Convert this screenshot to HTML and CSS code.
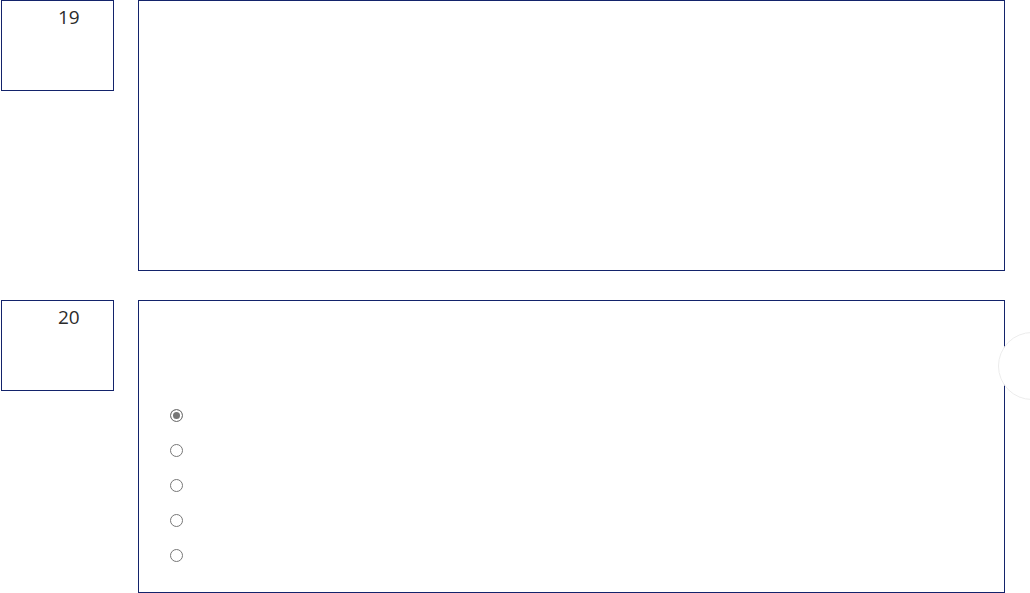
FILE: index.html
```html
<!DOCTYPE html>
<html lang="en">
  <head>
    <meta charset="UTF-8" />
    <meta name="viewport" content="width=device-width, initial-scale=1.0" />
    <title>Questions</title>
    <link rel="stylesheet" href="styles.css">
  </head>
  <body>
    <div class="question">
      <div class="q-number">19</div>
      <div class="q-body q-body-tall"></div>
    </div>

    <div class="question">
      <div class="q-number">20</div>
      <div class="q-body q-body-options">
        <ul class="options">
          <li><input type="radio" name="q20" checked disabled /></li>
          <li><input type="radio" name="q20" disabled /></li>
          <li><input type="radio" name="q20" disabled /></li>
          <li><input type="radio" name="q20" disabled /></li>
          <li><input type="radio" name="q20" disabled /></li>
        </ul>
      </div>
    </div>

    <button class="float-btn" aria-label="menu"></button>
  </body>
</html>
```

FILE: styles.css
```css
* {
  margin: 0;
  padding: 0;
  box-sizing: border-box;
}
body {
  background-color: white;
  font-family: "Open Sans", sans-serif;
  color: #2b2b2b;
  overflow: hidden;
}

.question {
  display: flex;
  align-items: flex-start;
  gap: 24px;
  padding-left: 1px;
  margin-bottom: 29px;
}

.q-number {
  width: 113px;
  height: 91px;
  border: 1px solid #13236b;
  padding: 3px 0 0 56px;
  font-size: 19px;
}

.q-body {
  width: 867px;
  border: 1px solid #13236b;
}
.q-body-tall {
  height: 271px;
}
.q-body-options {
  height: 293px;
  padding: 97px 0 0 31px;
}

.options {
  list-style: none;
}
.options li {
  height: 35px;
  display: flex;
  align-items: center;
}
.options input {
  appearance: none;
  width: 13px;
  height: 13px;
  margin: 0;
  border: 1px solid #777;
  border-radius: 50%;
  background: white;
}
.options input:checked {
  background: #777;
  box-shadow: inset 0 0 0 2px white;
}

/* floating button on the right edge */
.float-btn {
  position: fixed;
  top: 332px;
  left: 998px;
  width: 68px;
  height: 68px;
  border-radius: 50%;
  border: 1px solid #ececec;
  background: white;
}
```
